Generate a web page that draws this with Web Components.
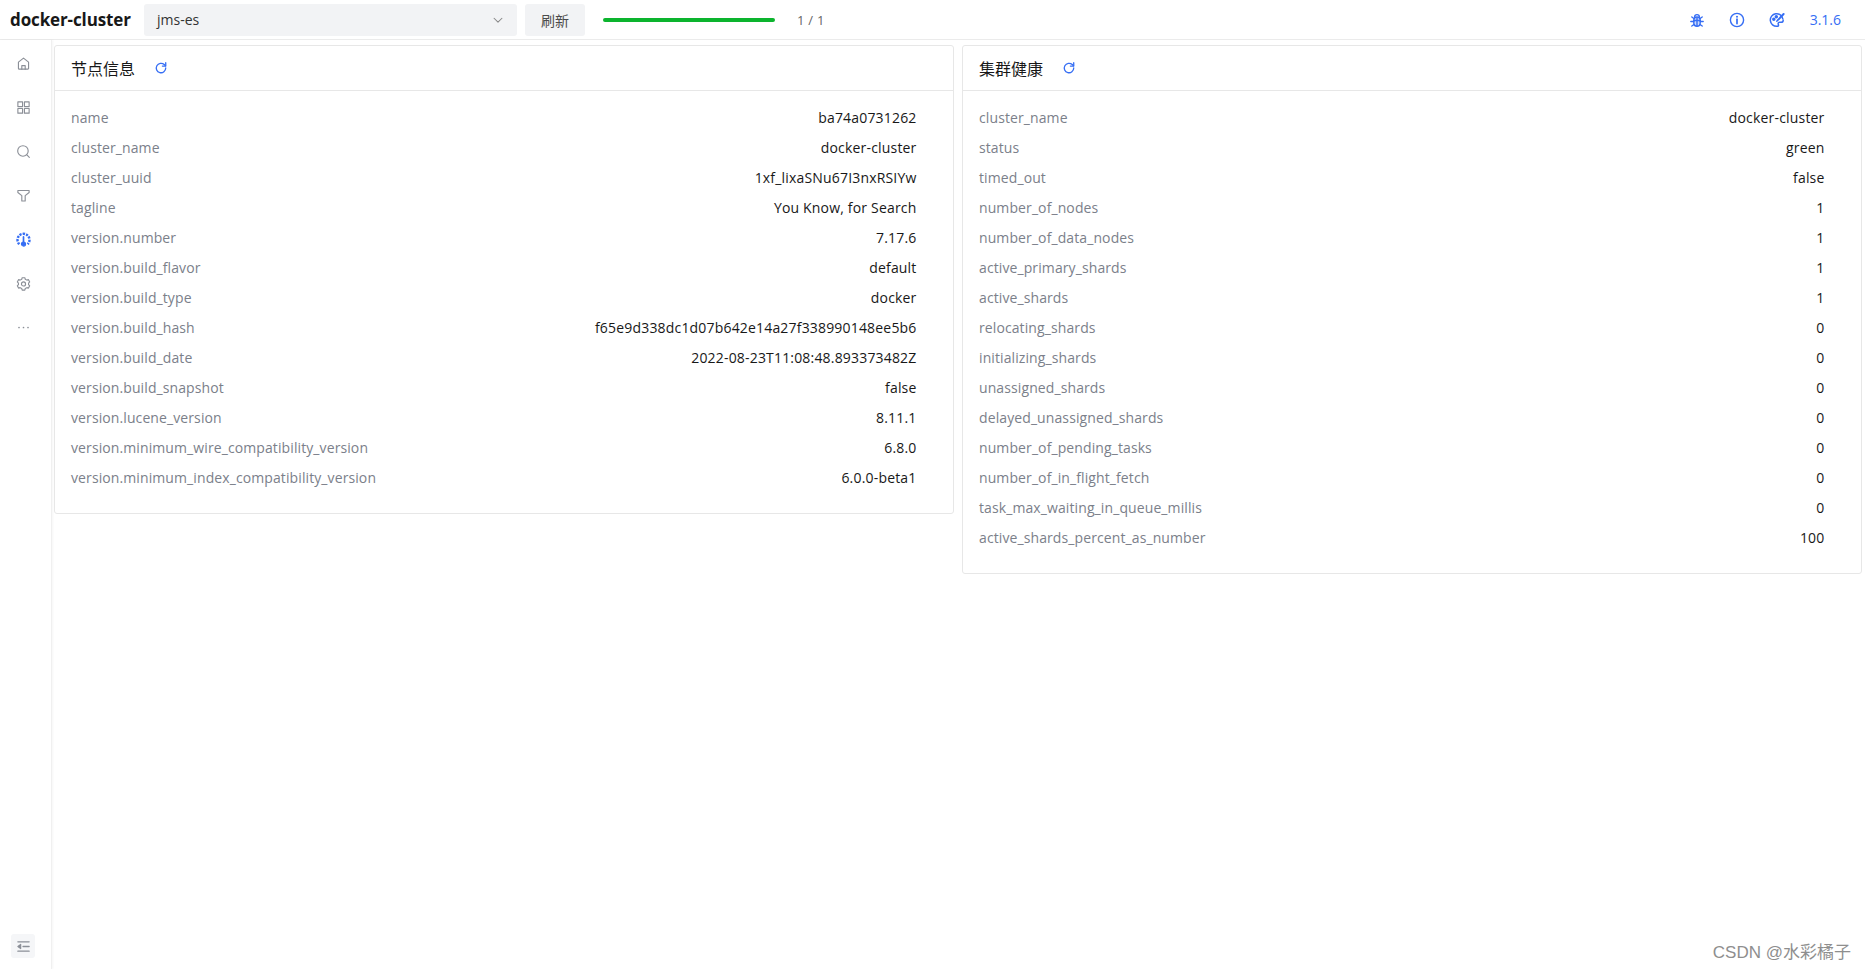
<!DOCTYPE html>
<html lang="zh"><head><meta charset="utf-8">
<style>
html,body{margin:0;height:100%;background:#fff}
body{font-family:"Open Sans","Noto Sans CJK SC",sans-serif;overflow:hidden}
</style></head><body>
<es-app></es-app>
<script>
const ic={
home:'<path d="M2.6 6.6 8 2.2l5.4 4.4v6.6a.8.8 0 0 1-.8.8H3.4a.8.8 0 0 1-.8-.8z"/><path d="M6.2 14v-3.8h3.6V14"/>',
grid:'<rect x="2" y="2" width="5" height="5"/><rect x="9" y="2" width="5" height="5"/><rect x="2" y="9" width="5" height="5"/><rect x="9" y="9" width="5" height="5"/>',
search:'<circle cx="7.4" cy="7.4" r="5.6"/><path d="m11.6 11.6 2.6 2.6"/>',
filter:'<path d="M2 2.6h12v2.2L9.800 8.200v5.600H6.200V8.200L2 4.800z"/>',
gauge:'<path d="M3.600 13a6.400 6.400 0 1 1 8.800 0" stroke-width="2.600" stroke-dasharray="2.400 1.100" stroke-linecap="butt"/><path d="M8 5.200v5.400" stroke-width="1.800"/><circle cx="8" cy="12.800" r="2.200" fill="currentColor"/>',
gear:'<path d="M6.600 1.800h2.800l.5 1.700 1.700.9 1.700-.5 1.300 2.400-1.200 1.300v1.600l1.200 1.300-1.300 2.400-1.700-.5-1.700.9-.5 1.700H6.600l-.5-1.700-1.700-.9-1.700.5-1.300-2.400 1.200-1.300V7.600L1.400 6.300l1.300-2.400 1.700.5 1.700-.9z"/><circle cx="8" cy="8.400" r="2.200"/>',
more:'<circle cx="3.200" cy="8" r=".9" fill="currentColor" stroke="none"/><circle cx="8" cy="8" r=".9" fill="currentColor" stroke="none"/><circle cx="12.800" cy="8" r=".9" fill="currentColor" stroke="none"/>',
fold:'<path d="M2 3h12M7.500 8H14M2 13h12" stroke-width="1.400"/><path d="M5 5.800v4.400L2 8z" fill="currentColor"/>',
refresh:'<path d="M13.400 8A5.400 5.400 0 1 1 11.700 4.100L13.200 5.600"/><path d="M13.400 2v3.800H9.600"/>',
chev:'<path d="m3.500 6 4.500 4.500L12.500 6"/>',
bug:'<path d="M4.800 8.200a3.200 3.200 0 0 1 6.400 0V11a3.200 3.200 0 0 1-6.400 0z" fill="currentColor" fill-opacity=".25"/><path d="M5.600 5a2.400 2.400 0 0 1 4.800 0M8 6v8M1.800 9.500h3M11.200 9.500h3M4.900 6.500 2.800 5M11.100 6.500 13.200 5M5 12.500l-2.200 1.500M11 12.500l2.200 1.500M4.800 8.500h6.400"/>',
info:'<circle cx="8" cy="8" r="6.600"/><path d="M8 7.200v4.400" stroke-width="1.700"/><circle cx="8" cy="4.800" r="1" fill="currentColor" stroke="none"/>',
palette:'<path d="M13.800 6.800A6.300 6.300 0 1 0 8 14.300c1.700 0 1.700-1.200 1.300-2-.5-1 .2-2 1.300-2h1.400c1.300 0 2.200-.8 2.200-2.100"/><circle cx="4.800" cy="7.200" r="1" fill="currentColor"/><circle cx="7.300" cy="4.800" r="1" fill="currentColor"/><path d="m14.600 2-5 5.400" stroke-width="2"/><path d="M7.800 9.200 9 7.800"/>'
};
const svg=(n,s=16,sw=1.2)=>`<svg viewBox="0 0 16 16" width="${s}" height="${s}" fill="none" stroke="currentColor" stroke-width="${sw}" stroke-linecap="round" stroke-linejoin="round" style="display:block">${ic[n]}</svg>`;
class Base extends HTMLElement{
 constructor(){super();this.attachShadow({mode:'open'}).innerHTML=this.render()}
}
customElements.define('es-icon',class extends Base{
 render(){return `<style>:host{display:inline-flex;color:inherit}</style>${svg(this.getAttribute('name'),+(this.getAttribute('size')||16),+(this.getAttribute('sw')||1.2))}`}
});
customElements.define('es-header',class extends Base{
 render(){return `<style>
 :host{display:flex;align-items:center;height:39px;border-bottom:1px solid #ebebeb;padding:0 24px 0 10px;font-size:14px;color:#000000e6}
 .title{font-size:17px;font-weight:700;letter-spacing:-.12px;width:134px;color:#181818;line-height:39px;white-space:nowrap}
 .select{width:373px;height:32px;box-sizing:border-box;background:#f2f3f5;border-radius:3px;display:flex;align-items:center;justify-content:space-between;padding:0 12px 0 13px;color:#333}
 .select es-icon{color:#888}
 .btn{margin-left:8px;width:60px;height:32px;background:#f2f3f5;border-radius:3px;display:flex;align-items:center;justify-content:center;color:#4b4b4b}
 .bar{margin-left:18px;width:172px;height:4px;border-radius:2px;background:#0cb42e}
 .count{margin-left:22px;color:#666;font-size:13px;word-spacing:.5px}
 .right{margin-left:auto;display:flex;align-items:center;color:#366ef4}
 .right es-icon{margin-right:24px}
 .ver{margin-left:1px}
 </style>
 <div class="title">docker-cluster</div>
 <div class="select"><span>jms-es</span><es-icon name="chev" size="14"></es-icon></div>
 <div class="btn">刷新</div>
 <div class="bar"></div>
 <div class="count">1 / 1</div>
 <div class="right"><es-icon name="bug" sw="1.4"></es-icon><es-icon name="info" sw="1.4"></es-icon><es-icon name="palette" sw="1.5"></es-icon><span class="ver">3.1.6</span></div>`}
});
customElements.define('es-sidebar',class extends Base{
 render(){const items=['home','grid','search','filter','gauge','gear','more'];
 return `<style>
 :host{display:flex;flex-direction:column;width:52px;box-sizing:border-box;border-right:1px solid #f0f0f0;box-shadow:1px 0 2px #0000000a;color:#8b8f97;align-items:center;padding:0 5px 0 0}
 .item{height:44px;width:100%;display:flex;align-items:center;justify-content:center;flex:none}
 .item.on{color:#366ef4}
 .list{padding-top:1px;width:100%}
 .fold{margin-top:auto;margin-bottom:11px;width:24px;height:24px;background:#f5f6f8;border-radius:3px;display:flex;align-items:center;justify-content:center}
 </style><div class="list">${items.map(n=>`<div class="item ${n=='gauge'?'on':''}">${svg(n,15)}</div>`).join('')}</div>
 <div class="fold">${svg('fold',15)}</div>`}
});
customElements.define('es-card',class extends Base{
 render(){return `<style>
 :host{display:block;flex:1 1 0;min-width:0;align-self:flex-start;box-sizing:border-box;border:1px solid #e7e7e7;border-radius:3px;background:#fff}
 .head{height:45px;box-sizing:border-box;border-bottom:1px solid #e7e7e7;padding:0 16px;display:flex;align-items:center;font-size:16px;color:#181818}
 .head es-icon{color:#366ef4;margin-left:19px}
 .body{padding:11px 36.500px 21px 16px}
 </style><div class="head"><span>${this.getAttribute('heading')}</span><es-icon name="refresh" size="14" sw="1.5"></es-icon></div>
 <div class="body"><slot></slot></div>`}
});
customElements.define('es-row',class extends Base{
 render(){return `<style>
 :host{display:flex;justify-content:space-between;height:30px;align-items:center;font-size:14px;white-space:nowrap}
 .k{color:#7b808a;letter-spacing:.1px}.v{color:#181818;letter-spacing:.18px}
 </style><span class="k">${this.getAttribute('k')}</span><span class="v">${this.getAttribute('v')}</span>`}
});
customElements.define('es-app',class extends Base{
 render(){return `<style>
 :host{display:flex;flex-direction:column;height:969px;position:relative}
 .main{flex:1;display:flex;min-height:0}
 .cards{flex:1;display:flex;gap:8px;padding:5px 3px 0 2px;min-width:0;align-items:flex-start}
 .mark{position:absolute;right:14px;bottom:6px;font:17px "Liberation Sans","Noto Sans CJK SC",sans-serif;color:#8e8e8e}
 </style><es-header></es-header><div class="main"><es-sidebar></es-sidebar><div class="cards">
 <es-card heading="节点信息">${rows([["name","ba74a0731262"],["cluster_name","docker-cluster"],["cluster_uuid","1xf_lixaSNu67I3nxRSIYw"],["tagline","You Know, for Search"],["version.number","7.17.6"],["version.build_flavor","default"],["version.build_type","docker"],["version.build_hash","f65e9d338dc1d07b642e14a27f338990148ee5b6"],["version.build_date","2022-08-23T11:08:48.893373482Z"],["version.build_snapshot","false"],["version.lucene_version","8.11.1"],["version.minimum_wire_compatibility_version","6.8.0"],["version.minimum_index_compatibility_version","6.0.0-beta1"]])}</es-card>
 <es-card heading="集群健康">${rows([["cluster_name","docker-cluster"],["status","green"],["timed_out","false"],["number_of_nodes","1"],["number_of_data_nodes","1"],["active_primary_shards","1"],["active_shards","1"],["relocating_shards","0"],["initializing_shards","0"],["unassigned_shards","0"],["delayed_unassigned_shards","0"],["number_of_pending_tasks","0"],["number_of_in_flight_fetch","0"],["task_max_waiting_in_queue_millis","0"],["active_shards_percent_as_number","100"]])}</es-card>
 </div></div><div class="mark">CSDN @水彩橘子</div>`}
});
function rows(a){return a.map(([k,v])=>`<es-row k="${k}" v="${v}"></es-row>`).join('')}
</script></body></html>
